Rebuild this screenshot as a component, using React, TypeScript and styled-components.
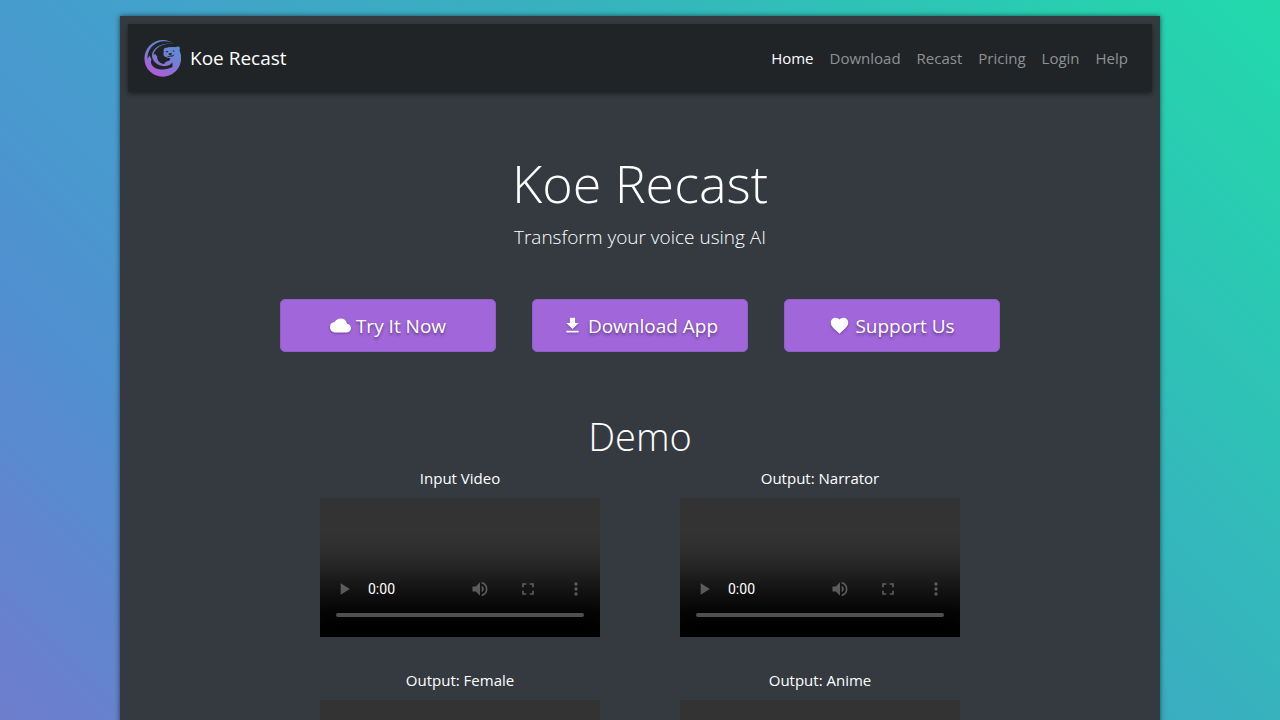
import React from "react";
import styled, { createGlobalStyle } from "styled-components";
import { MdCloud, MdFileDownload, MdFavorite } from "react-icons/md";

const GlobalStyle = createGlobalStyle`
  *, *::before, *::after {
    box-sizing: border-box;
  }
  html {
    scrollbar-width: none;
  }
  body {
    margin: 0;
    min-height: 100vh;
    background: linear-gradient(
      225deg,
      #22daab 0%,
      #37b2be 36%,
      #469cce 64%,
      #5090d0 78%,
      #6f7dcd 100%
    ) fixed;
    color: #fff;
    font-family: "Segoe UI", "Open Sans", "Noto Sans", sans-serif;
    font-size: 15px;
    line-height: 24px;
  }
`;

const Panel = styled.div`
  max-width: 1040px;
  margin: 16px auto;
  padding: 8px;
  background: #343a40;
  box-shadow: 0 0 5px rgba(0, 0, 0, 0.6);
`;

const Navbar = styled.header`
  display: flex;
  align-items: center;
  justify-content: space-between;
  flex-wrap: wrap;
  min-height: 68px;
  padding: 8px 16px;
  background: #202427;
  box-shadow: 0 2px 5px rgba(0, 0, 0, 0.45);
`;

const Brand = styled.a`
  display: flex;
  align-items: center;
  gap: 8px;
  color: #fff;
  font-size: 19px;
  line-height: 30px;
  text-decoration: none;
`;

const NavLinks = styled.nav`
  display: flex;
  flex-wrap: wrap;
`;

const NavLink = styled.a<{ $active?: boolean }>`
  padding: 8px;
  color: ${({ $active }) => ($active ? "#fff" : "#909294")};
  text-decoration: none;
`;

const Hero = styled.section`
  display: flex;
  flex-direction: column;
  align-items: center;
  padding: 57px 16px 0;
  text-align: center;
`;

const Title = styled.h1`
  margin: 0;
  font-size: 52px;
  font-weight: 300;
  line-height: 68px;
`;

const Lead = styled.p`
  margin: 5px 0 0;
  font-size: 19px;
  font-weight: 300;
  line-height: 30px;
`;

const Actions = styled.div`
  display: flex;
  flex-wrap: wrap;
  justify-content: center;
  gap: 36px;
  margin-top: 47px;
`;

const ActionButton = styled.button`
  display: flex;
  align-items: center;
  justify-content: center;
  gap: 5px;
  width: 216px;
  height: 53px;
  border: 1px solid #9160c4;
  border-radius: 5px;
  background: #a166da;
  color: #fff;
  font-family: inherit;
  font-size: 19px;
  line-height: 30px;
  text-shadow: 0 2px 3px rgba(0, 0, 0, 0.4);
  cursor: pointer;

  svg {
    filter: drop-shadow(0 1px 1px rgba(0, 0, 0, 0.3));
  }
`;

const Demo = styled.section`
  padding: 60px 16px 40px;
`;

const DemoTitle = styled.h2`
  margin: 0 0 6px;
  font-size: 38px;
  font-weight: 300;
  line-height: 48px;
  text-align: center;
`;

const DemoGrid = styled.div`
  display: grid;
  grid-template-columns: repeat(auto-fit, 280px);
  justify-content: center;
  gap: 31px 80px;
  max-width: 720px;
  margin: 0 auto;
`;

const Clip = styled.figure`
  display: flex;
  flex-direction: column;
  gap: 8px;
  margin: 0;
  text-align: center;
`;

const Player = styled.video`
  display: block;
  width: 100%;
  height: 139px;
`;

function OtterLogo() {
  return (
    <svg width="38" height="38" viewBox="0 -1 38 38" aria-hidden="true">
      <defs>
        <linearGradient id="otter" gradientUnits="userSpaceOnUse" x1="10" y1="36" x2="27" y2="2">
          <stop offset="0" stopColor="#b558da" />
          <stop offset="0.5" stopColor="#7b7bd6" />
          <stop offset="1" stopColor="#5590d4" />
        </linearGradient>
      </defs>
      <circle cx="18.700" cy="18.400" r="18.300" fill="url(#otter)" />
      {/* gap between the tail, the back and the belly */}
      <path
        fill="#202427"
        d="M28 2.500C20 0 12.500 1.500 7.500 7 4.500 10.500 3.300 14.500 3.600 19L5.500 15.500 7.500 19.500C6 22 7.500 26 11.500 28.300 17 30.500 24 29.500 28.500 27L28.500 22.500 25.500 25C22.500 26.500 18.500 26.500 15 25C11 23 7.800 19.500 8 15 8.500 8.500 16 2.800 28 3.500Z"
      />
      {/* hollow in front of the otter's chest */}
      <path
        fill="#202427"
        d="M29.500 3.300C19 3 9.800 8 9.500 15.500L11 13.800 13.200 16.500C13 20.500 16 23.500 20 24L22 21.800 25.500 20.500 26.500 18.500 19.800 16 20 9.500 24 7.200 34 7.800 38 7V-2H24L30 2.800Z"
      />
      {/* head, neck and shoulder */}
      <path
        fill="url(#otter)"
        d="M19.800 9.400c.5-1.500 2-1.900 3.300-1.200 2.600-1.300 5.400-1.500 8.200-.9 1.300-1 3.300-1.300 4.200-.2.700 1 .400 2.300-.1 3.500 1.100 2.400 1.600 5 1.600 7.900L35 26l-6-3 .500-3-2.500-2.300c-3 .4-5.400-.3-6.700-2-1.100-1.500-.900-2.700-.3-4.300-.6-.5-.5-1.300-.2-2Z"
      />
      <g fill="#202427">
        <ellipse cx="23" cy="11.700" rx="1.100" ry=".6" />
        <ellipse cx="29.500" cy="11" rx="1.100" ry=".6" />
        <path d="m24.400 13.500 3.300-.5c.6 1-.2 1.900-1.400 2-1.100.100-1.900-.5-1.900-1.500Z" />
        <path d="M22 15.700c1.600.8 3 .6 4.300-.3 1.500.5 2.900.1 3.900-.8-.4 1.700-2 2.500-3.900 2-1.600.6-3.400.200-4.300-.9Z" />
      </g>
    </svg>
  );
}

const navItems = ["Home", "Download", "Recast", "Pricing", "Login", "Help"];

const actions = [
  { label: "Try It Now", Icon: MdCloud },
  { label: "Download App", Icon: MdFileDownload },
  { label: "Support Us", Icon: MdFavorite },
];

const clips = ["Input Video", "Output: Narrator", "Output: Female", "Output: Anime"];

export default function App() {
  return (
    <>
      <GlobalStyle />
      <Panel>
        <Navbar>
          <Brand href="#home">
            <OtterLogo />
            Koe Recast
          </Brand>
          <NavLinks aria-label="Main">
            {navItems.map((item) => (
              <NavLink key={item} href={`#${item.toLowerCase()}`} $active={item === "Home"}>
                {item}
              </NavLink>
            ))}
          </NavLinks>
        </Navbar>
        <main>
          <Hero>
            <Title>Koe Recast</Title>
            <Lead>Transform your voice using AI</Lead>
            <Actions>
              {actions.map(({ label, Icon }) => (
                <ActionButton key={label} type="button">
                  <Icon size={21} aria-hidden="true" />
                  {label}
                </ActionButton>
              ))}
            </Actions>
          </Hero>
          <Demo>
            <DemoTitle>Demo</DemoTitle>
            <DemoGrid>
              {clips.map((title) => (
                <Clip key={title}>
                  <figcaption>{title}</figcaption>
                  <Player controls aria-label={title} />
                </Clip>
              ))}
            </DemoGrid>
          </Demo>
        </main>
      </Panel>
    </>
  );
}
